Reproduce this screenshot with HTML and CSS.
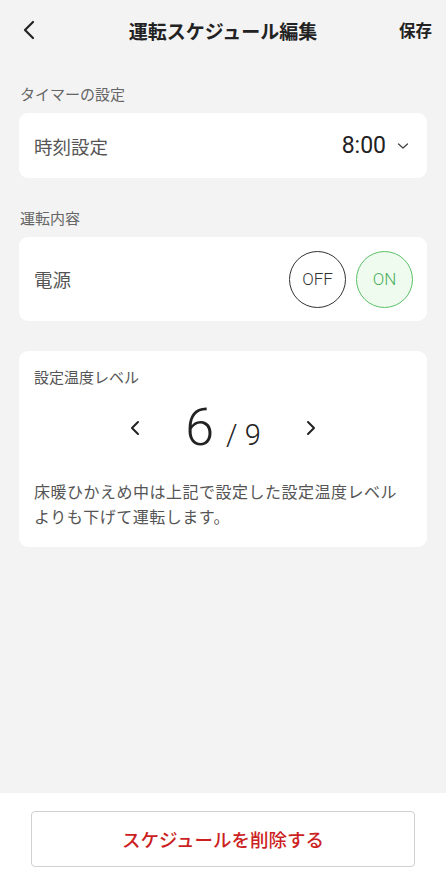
FILE: index.html
```html
<!DOCTYPE html>
<html lang="ja">
<head>
    <meta charset="UTF-8">
    <meta name="viewport" content="width=device-width, initial-scale=1.0">
    <title>運転スケジュール編集</title>
    <link rel="stylesheet" href="styles.css">
</head>
<body>
    <div class="page">
        <div class="header">
            <button class="back" aria-label="戻る">
                <svg width="14" height="20" viewBox="0 0 14 20"><path d="M11 2 L3 10 L11 18" fill="none" stroke="#222" stroke-width="2.2" stroke-linecap="round" stroke-linejoin="round"/></svg>
            </button>
            <h1>運転スケジュール編集</h1>
            <button class="save">保存</button>
        </div>

        <div class="content">
            <div class="section-label">タイマーの設定</div>
            <div class="card row">
                <span class="row-title">時刻設定</span>
                <span class="time">8:00
                    <svg width="12" height="8" viewBox="0 0 12 8"><path d="M1.5 2 L6 6 L10.5 2" fill="none" stroke="#444" stroke-width="1.3" stroke-linecap="round" stroke-linejoin="round"/></svg>
                </span>
            </div>

            <div class="section-label">運転内容</div>
            <div class="card row power">
                <span class="row-title">電源</span>
                <div class="toggle">
                    <span class="circle off">OFF</span>
                    <span class="circle on">ON</span>
                </div>
            </div>

            <div class="card level">
                <div class="level-title">設定温度レベル</div>
                <div class="stepper">
                    <svg class="arrow" width="12" height="20" viewBox="0 0 12 20"><path d="M9 4 L3 10 L9 16" fill="none" stroke="#222" stroke-width="2" stroke-linecap="round" stroke-linejoin="round"/></svg>
                    <div class="value"><span class="cur">6</span><span class="max">/ 9</span></div>
                    <svg class="arrow" width="12" height="20" viewBox="0 0 12 20"><path d="M3 4 L9 10 L3 16" fill="none" stroke="#222" stroke-width="2" stroke-linecap="round" stroke-linejoin="round"/></svg>
                </div>
                <p class="note">床暖ひかえめ中は上記で設定した設定温度レベルよりも下げて運転します。</p>
            </div>
        </div>

        <div class="footer">
            <button class="delete">スケジュールを削除する</button>
        </div>
    </div>
</body>
</html>
```

FILE: styles.css
```css
body {
    margin: 0;
    padding: 0;
    background-color: #f3f3f3;
    font-family: "Noto Sans CJK JP", "Noto Sans", sans-serif;
    color: #333;
}
button {
    font-family: inherit;
    background: none;
    border: none;
    padding: 0;
    cursor: pointer;
}
.page {
    display: flex;
    flex-direction: column;
    height: 888px;
}
.header {
    display: grid;
    grid-template-columns: 1fr auto 1fr;
    align-items: center;
    height: 60px;
    padding: 0 14px;
}
.header h1 {
    margin: 0;
    font-size: 19px;
    font-weight: 700;
    color: #222;
}
.back {
    width: 40px;
    height: 30px;
    padding-left: 8px;
    display: flex;
    align-items: center;
}
.save {
    justify-self: end;
    font-size: 16.5px;
    font-weight: 700;
    color: #222;
}
.content {
    flex: 1;
    padding: 20px 19px 0 19px;
}
.section-label {
    font-size: 15px;
    color: #666;
    padding-left: 1px;
    height: 33px;
    line-height: 28px;
}
.card {
    background-color: #fff;
    border-radius: 9px;
}
.row {
    display: flex;
    align-items: center;
    justify-content: space-between;
    height: 65px;
    padding: 0 18px 0 15px;
    margin-bottom: 26px;
}
.row-title {
    font-size: 18.5px;
    color: #555;
}
.time {
    display: flex;
    align-items: center;
    gap: 11px;
    font-family: Roboto, "Noto Sans", sans-serif;
    font-size: 23px;
    color: #222;
}
.power {
    height: 84px;
    padding-right: 14px;
    margin-bottom: 30px;
}
.toggle {
    display: flex;
    gap: 10px;
}
.circle {
    width: 55px;
    height: 55px;
    border-radius: 50%;
    display: flex;
    align-items: center;
    justify-content: center;
    font-family: Roboto, "Noto Sans", sans-serif;
    font-size: 17px;
    font-weight: 300;
}
.off {
    border: 1px solid #333;
    color: #333;
}
.on {
    border: 1px solid #5cc26a;
    background-color: #effbef;
    color: #4cae5a;
}
.level {
    padding: 16px 15px 18px 15px;
}
.level-title {
    font-size: 15px;
    color: #555;
    line-height: 20px;
}
.stepper {
    display: flex;
    align-items: center;
    justify-content: center;
    gap: 44px;
    height: 72px;
    margin-top: 4px;
}
.stepper .arrow {
    margin-top: 2px;
}
.value {
    display: flex;
    align-items: baseline;
    gap: 12px;
    color: #222;
    font-family: Roboto, "Noto Sans", sans-serif;
}
.cur {
    font-size: 52px;
    font-weight: 300;
}
.max {
    font-size: 29px;
    font-weight: 300;
}
.note {
    margin: 16px 0 0 0;
    font-size: 16px;
    letter-spacing: 0.5px;
    line-height: 25px;
    color: #555;
}
.footer {
    background-color: #fff;
    height: 95px;
    padding: 18px 31px 0 31px;
    box-sizing: border-box;
}
.delete {
    width: 100%;
    height: 56px;
    border: 1px solid #d0d0d0;
    border-radius: 4px;
    background-color: #fff;
    font-size: 18.5px;
    font-weight: 500;
    color: #cc1f1f;
}
```
